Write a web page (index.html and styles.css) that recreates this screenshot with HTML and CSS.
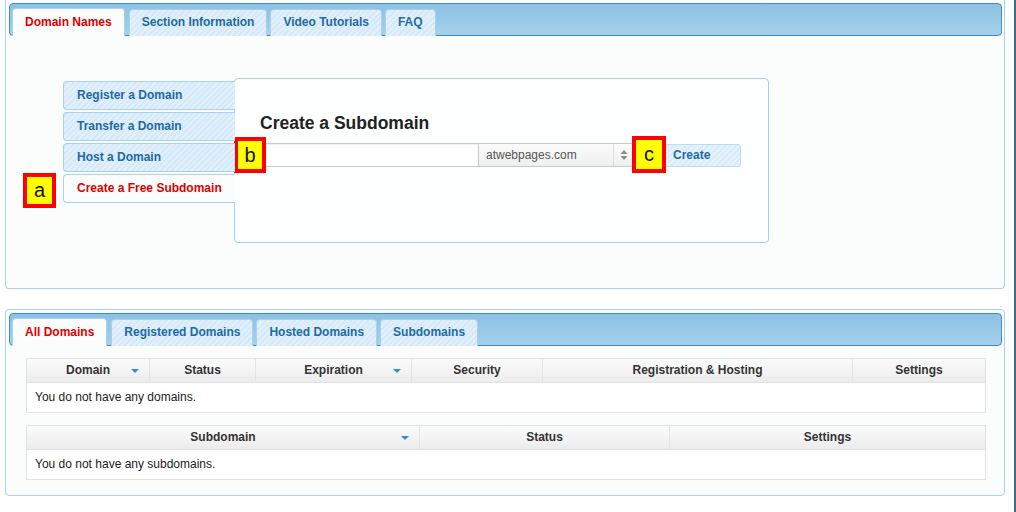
FILE: index.html
```html
<!DOCTYPE html>
<html>
<head>
<meta charset="utf-8">
<link rel="stylesheet" href="styles.css">
</head>
<body>
<div class="page">
  <div class="main">
    <section class="panel panel-top">
      <div class="tabbar">
        <div class="tab active">Domain Names</div>
        <div class="tab">Section Information</div>
        <div class="tab">Video Tutorials</div>
        <div class="tab">FAQ</div>
      </div>
      <div class="content">
        <div class="menu">
          <div class="menu-item">Register a Domain</div>
          <div class="menu-item">Transfer a Domain</div>
          <div class="menu-item">Host a Domain</div>
          <div class="menu-item active">Create a Free Subdomain</div>
        </div>
        <div class="box">
          <h2 class="box-title">Create a Subdomain</h2>
          <div class="form-row">
            <div class="input"></div>
            <div class="select">
              <span class="select-text">atwebpages.com</span>
              <span class="select-arrows">
                <svg width="8" height="12" viewBox="0 0 8 12"><path d="M4 1 L7.5 5 L0.5 5 Z" fill="#8a8a8a"/><path d="M4 11 L7.5 7 L0.5 7 Z" fill="#8a8a8a"/></svg>
              </span>
            </div>
            <div class="button">Create</div>
          </div>
        </div>
      </div>
    </section>

    <section class="panel panel-bottom">
      <div class="tabbar">
        <div class="tab active">All Domains</div>
        <div class="tab">Registered Domains</div>
        <div class="tab">Hosted Domains</div>
        <div class="tab">Subdomains</div>
      </div>
      <div class="tables">
        <div class="table">
          <div class="thead cols-1">
            <div class="th sortable">Domain</div>
            <div class="th">Status</div>
            <div class="th sortable">Expiration</div>
            <div class="th">Security</div>
            <div class="th">Registration &amp; Hosting</div>
            <div class="th">Settings</div>
          </div>
          <div class="tbody">You do not have any domains.</div>
        </div>
        <div class="table">
          <div class="thead cols-2">
            <div class="th sortable">Subdomain</div>
            <div class="th">Status</div>
            <div class="th">Settings</div>
          </div>
          <div class="tbody">You do not have any subdomains.</div>
        </div>
      </div>
    </section>
  </div>
  <div class="strip"></div>
</div>

<div class="marker marker-a">a</div>
<div class="marker marker-b">b</div>
<div class="marker marker-c">c</div>
</body>
</html>
```

FILE: styles.css
```css
html, body {
  margin: 0;
  padding: 0;
  background: #ffffff;
}
body {
  font-family: "Liberation Sans", Arial, Helvetica, sans-serif;
  font-size: 12px;
  color: #222;
  width: 1016px;
  height: 512px;
  overflow: hidden;
  position: relative;
}
.page {
  display: flex;
  width: 1016px;
  height: 512px;
}
.main {
  width: 1014px;
}
.strip {
  width: 2px;
  background: #2f6f9e;
}

.panel {
  margin-left: 5px;
  width: 1000px;
  box-sizing: border-box;
  border: 1px solid #a9d2ec;
  border-radius: 4px;
  background: #fbfdfd;
  padding: 3px 2px 0 3px;
}
.panel-top {
  border-top: none;
  border-top-left-radius: 0;
  border-top-right-radius: 0;
  height: 289px;
}
.panel-bottom {
  margin-top: 20px;
  height: 187px;
}

.tabbar {
  height: 31px;
  border: 1px solid #3d8dd0;
  border-radius: 4px;
  background: linear-gradient(#8cc1e3, #a5d0ea);
  display: flex;
  align-items: flex-end;
  gap: 3px;
  padding-left: 2px;
}
.tab {
  height: 26px;
  margin-bottom: -1px;
  padding: 0 12px;
  border: 1px solid #a7d1ee;
  border-bottom: none;
  border-radius: 4px 4px 0 0;
  background: repeating-linear-gradient(135deg, #e1f0fb 0 2px, #d5e9f8 2px 4px);
  color: #1d6aa5;
  font-weight: bold;
  font-size: 12px;
  line-height: 25px;
  white-space: nowrap;
}
.tab.active {
  background: #fbfdfd;
  color: #dd0000;
  height: 27px;
  line-height: 26px;
  margin-right: 1px;
}

.content {
  height: 252px;
  box-sizing: border-box;
  padding: 42px 0 0 54px;
  display: flex;
  align-items: flex-start;
}
.menu {
  margin-top: 3px;
  display: flex;
  flex-direction: column;
  gap: 2px;
  position: relative;
  z-index: 1;
  margin-right: -1px;
}
.menu-item {
  width: 172px;
  height: 29px;
  box-sizing: border-box;
  border: 1px solid #a7d1ee;
  border-right: none;
  border-radius: 4px 0 0 4px;
  background: repeating-linear-gradient(135deg, #e1f0fb 0 2px, #d5e9f8 2px 4px);
  color: #1d6aa5;
  font-weight: bold;
  line-height: 27px;
  padding-left: 13px;
}
.menu-item.active {
  background: #fbfdfd;
  color: #dd0000;
}

.box {
  width: 535px;
  height: 165px;
  box-sizing: border-box;
  border: 1px solid #a6cfec;
  border-radius: 4px;
  background: #fdfefe;
  padding: 34px 0 0 25px;
}
.box-title {
  margin: 0;
  font-size: 17.5px;
  line-height: 20px;
  font-weight: bold;
  color: #222;
}
.form-row {
  margin-top: 10px;
  display: flex;
  align-items: flex-start;
}
.input {
  width: 219px;
  height: 24px;
  box-sizing: border-box;
  border: 1px solid #c9c9c9;
  background: #fff;
  box-shadow: inset 0 1px 1px rgba(0,0,0,0.06);
}
.select {
  width: 155px;
  height: 24px;
  box-sizing: border-box;
  border: 1px solid #c9c9c9;
  border-left: none;
  background: linear-gradient(#fbfbfb, #efefef);
  display: flex;
  align-items: center;
}
.select-text {
  flex: 1;
  padding-left: 7px;
  font-size: 12px;
  color: #555;
}
.select-arrows {
  width: 19px;
  height: 22px;
  border-left: 1px solid #dcdcdc;
  display: flex;
  align-items: center;
  justify-content: center;
}
.select-arrows svg {
  display: block;
}
.button {
  margin-left: 30px;
  margin-top: 1px;
  width: 77px;
  height: 23px;
  box-sizing: border-box;
  border: 1px solid #bcdcf2;
  border-radius: 3px;
  background: repeating-linear-gradient(135deg, #e5f2fc 0 2px, #d9ecf9 2px 4px);
  color: #1d6aa5;
  font-weight: bold;
  line-height: 21px;
  padding-left: 8px;
}

.tables {
  padding: 12px 0 0 17px;
  display: flex;
  flex-direction: column;
  gap: 12px;
}
.table {
  width: 960px;
  box-sizing: border-box;
  border: 1px solid #e2e2e2;
  background: #fff;
}
.thead {
  display: grid;
  height: 23px;
  border-bottom: 1px solid #e2e2e2;
  background: linear-gradient(#fbfbfb, #ececec);
}
.cols-1 {
  grid-template-columns: 123px 106px 156px 131px 310px 1fr;
}
.cols-2 {
  grid-template-columns: 393px 250px 1fr;
}
.th {
  position: relative;
  text-align: center;
  font-weight: bold;
  color: #333;
  line-height: 23px;
  border-right: 1px solid #e4e4e4;
}
.th:last-child {
  border-right: none;
}
.th.sortable::after {
  content: "";
  position: absolute;
  right: 10px;
  top: 10px;
  width: 0;
  height: 0;
  border-left: 4px solid transparent;
  border-right: 4px solid transparent;
  border-top: 4px solid #2d8fd9;
}
.tbody {
  height: 29px;
  line-height: 29px;
  padding-left: 8px;
  color: #222;
}

.marker {
  position: absolute;
  box-sizing: border-box;
  border: 4px solid #ff0000;
  background: #ffff00;
  color: #111;
  font-size: 20px;
  display: flex;
  align-items: center;
  justify-content: center;
}
.marker-a {
  left: 23px;
  top: 173px;
  width: 33px;
  height: 35px;
}
.marker-b {
  left: 234px;
  top: 137px;
  width: 32px;
  height: 36px;
}
.marker-c {
  left: 632px;
  top: 136px;
  width: 34px;
  height: 37px;
}
```
